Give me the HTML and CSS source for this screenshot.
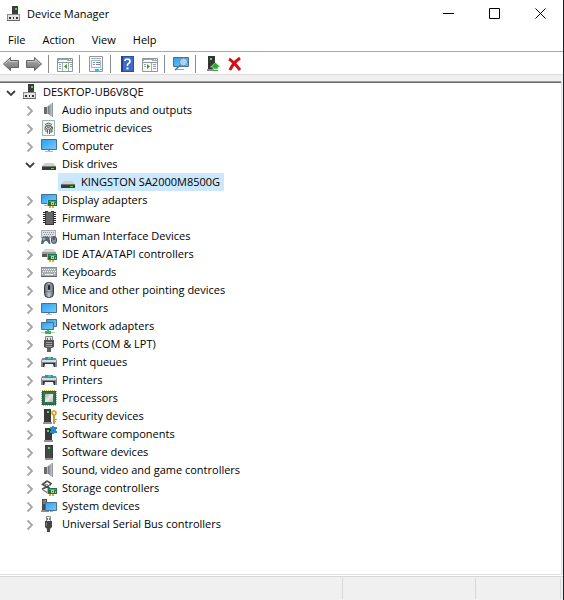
FILE: index.html
```html
<!DOCTYPE html>
<html lang="en">
<head>
<meta charset="utf-8">
<meta name="viewport" content="width=device-width, initial-scale=1">
<title>Device Manager</title>
<link rel="stylesheet" href="styles.css">
</head>
<body>
<svg class="sprite" aria-hidden="true">
  <defs>
    <linearGradient id="blue" x1="0" y1="0" x2="1" y2="1"><stop offset="0" stop-color="#2aa0f0"/><stop offset="1" stop-color="#7cc8ff"/></linearGradient>
    <linearGradient id="metal" x1="0" y1="0" x2="1" y2="0"><stop offset="0" stop-color="#626468"/><stop offset="1" stop-color="#c4c8cc"/></linearGradient>
    <linearGradient id="grey" x1="0" y1="0" x2="0" y2="1"><stop offset="0" stop-color="#b4b4b4"/><stop offset="1" stop-color="#707070"/></linearGradient>
    <linearGradient id="mousebody" x1="0" y1="0" x2="1" y2="0"><stop offset="0" stop-color="#59616d"/><stop offset=".5" stop-color="#c3cad3"/><stop offset="1" stop-color="#59616d"/></linearGradient>
    <linearGradient id="die" x1="0" y1="0" x2="1" y2="1"><stop offset="0" stop-color="#aaa"/><stop offset=".5" stop-color="#e8e8e8"/><stop offset="1" stop-color="#b8b8b8"/></linearGradient>
    <symbol id="closed" viewBox="0 0 14 18"><path d="M4.500 5.500l4.500 4.500-4.500 4.500" fill="none" stroke="#a6a6a6" stroke-width="1.800"/></symbol>
    <symbol id="open" viewBox="0 0 14 18"><path d="M3 8l4 4 4-4" fill="none" stroke="#404040" stroke-width="1.800"/></symbol>
    <symbol id="pc" viewBox="0 0 16 16"><path d="M6 0h6v8H6z" fill="#3c3c3c"/><path d="M9 2h2v2H9z" fill="#38e038"/><path d="M1 8h13v7H1z" fill="#8c8c8c"/><path d="M2 9h11v5H2z" fill="#e4e4e4"/><path d="M1 14h13v1H1z" fill="#666"/><path d="M3 11h2v2H3zM7 11h1v2H7zM10 11h2v2h-2z" fill="#333"/></symbol>
    <symbol id="speaker" viewBox="0 0 16 16"><path d="M3 5h3v7H3z" fill="#666a6e"/><path d="M6 5l5-4v14l-5-4z" fill="url(#metal)"/><path d="M11 1h1v14h-1z" fill="#8e989e"/><path d="M6 5h1v7H6z" fill="#b9c0c5"/></symbol>
    <symbol id="finger" viewBox="0 0 16 16"><path d="M1.500 .5h12v15h-12z" fill="#f4f7f5" stroke="#9bb5a7"/><g fill="none" stroke="#4d4d4d" stroke-width=".9"><path d="M4 4.500q3.500-3 7 0M3.500 7q4-4 8 0v2M4 10q-.5-4 3.500-4t3.500 4v2M5 12V9.500q0-2 2.500-2T10 10v3M6.500 13.500V10q0-1 1-1t1 1v4"/></g></symbol>
    <symbol id="display" viewBox="0 0 16 16"><path d="M.5 1.500h15v10H.5z" fill="url(#blue)" stroke="#47718f"/><path d="M7 12h2v1H7z" fill="#8fa9ba"/><path d="M4 13h8v1H4z" fill="#a9bac5"/></symbol>
    <symbol id="monitor" viewBox="0 0 16 16"><path d="M.5 3.500h15v9H.5z" fill="url(#blue)" stroke="#47718f"/><path d="M7 13h2v1H7z" fill="#8fa9ba"/><path d="M5 14h6v1H5z" fill="#b9c8d1"/></symbol>
    <symbol id="disk" viewBox="0 0 16 16"><path d="M4 7h8l3 3H1z" fill="#d0d0d0"/><path d="M1 10h14v4H1z" fill="#3a3a3a"/><path d="M1 10h14v1H1z" fill="#777"/><path d="M10 12h3v1h-3z" fill="#34e234"/></symbol>
    <symbol id="card" viewBox="0 0 16 16"><path d="M6 8h1v6H6z" fill="#adb3b0"/><path d="M7 8h9v6H7z" fill="#207345"/><path d="M8 9h7v1H8z" fill="#50a472"/><path d="M10 10h3v3h-3z" fill="#b7ceb9"/><path d="M11 11h1v1h-1z" fill="#36563f"/><path d="M14 11h1v2h-1z" fill="#7ac695"/><path d="M8 14h2v2H8zM11 14h2v2h-2z" fill="#e9a626"/></symbol>
    <symbol id="adapter" viewBox="0 0 16 16"><path d="M.5 2.500h15v9H.5z" fill="url(#blue)" stroke="#47718f"/><path d="M3 13h4v1H3z" fill="#a9bac5"/><use href="#card"/></symbol>
    <symbol id="chip" viewBox="0 0 16 16"><path d="M4 1h9v14H4z" fill="#383838"/><path d="M5 2h7v12H5z" fill="#666"/><path d="M7 1h3v1H7z" fill="#ddd"/><path d="M2 2.500h2M2 4.500h2M2 6.500h2M2 8.500h2M2 10.500h2M2 12.500h2M13 2.500h2M13 4.500h2M13 6.500h2M13 8.500h2M13 10.500h2M13 12.500h2" stroke="#222"/></symbol>
    <symbol id="hid" viewBox="0 0 16 16"><path d="M0 2h15v8H0z" fill="#a8adb2"/><path d="M1 3h13v6H1z" fill="#dfe2e5"/><path d="M2 4.500h11M3 6.500h10M2 8.500h11" stroke="#8a8f94" stroke-dasharray="1 1"/><path d="M0 16l1-6q.5-2 2.500-1.500h2Q8 8 8.500 10l1 6H8l-2-3H4l-2 3z" fill="#56626f"/><path d="M3 9.500v3M1.500 11h3" stroke="#b6c4d0"/><path d="M6 10h1v1H6z" fill="#e34b3f"/><rect x="10.500" y="8.500" width="5" height="7" rx="2.500" fill="#8793a0" stroke="#46515d"/><path d="M13 9v3" stroke="#263440"/></symbol>
    <symbol id="ide" viewBox="0 0 16 16"><path d="M4 3h8l3 3H1z" fill="#d6d6d6"/><path d="M1 6h14v5H1z" fill="#555"/><path d="M1 6h14v2H1z" fill="#999"/><use href="#card"/></symbol>
    <symbol id="keyboard" viewBox="0 0 16 16"><path d="M0 3h16v10H0z" fill="#868c92"/><path d="M1 4h14v8H1z" fill="#a7adb2"/><path d="M1 5.500h14M2 7.500h13M1 9.500h2M13 9.500h2" stroke="#f4f4f4" stroke-dasharray="1 1"/><path d="M4 10.500h8" stroke="#f4f4f4"/><path d="M0 12h16v1H0z" fill="#5e646a"/></symbol>
    <symbol id="mouse" viewBox="0 0 16 16"><rect x="3.500" y=".5" width="9" height="15" rx="4" fill="url(#mousebody)" stroke="#35383d"/><path d="M6 2h4v6H6z" fill="#7e8996"/><rect x="7" y="3" width="2" height="5" rx="1" fill="#20252b"/><path d="M4 9q4 2 8 0" fill="none" stroke="#6e7681"/></symbol>
    <symbol id="network" viewBox="0 0 16 16"><path d="M5.500 1.500h10v7h-10z" fill="url(#blue)" stroke="#47718f"/><path d="M.5 4.500h12v7H.5z" fill="url(#blue)" stroke="#47718f"/><path d="M6 12h2v2H6z" fill="#39bc55"/><path d="M0 14h14v1H0z" fill="#acd8b4"/><path d="M4 13h6v3H4z" fill="#38b451"/></symbol>
    <symbol id="port" viewBox="0 0 16 16"><path d="M4.500.5h7v4h-7z" fill="#e4e4e4" stroke="#828282"/><path d="M6 2h1v2H6zM9 2h1v2H9z" fill="#666"/><path d="M3 4h10v7l-2 1H5l-2-1z" fill="#555"/><path d="M5 6.500h6M5 8.500h6M5 10.500h6" stroke="#a1a1a1"/><path d="M6 12h4v4H6z" fill="#626262"/></symbol>
    <symbol id="printer" viewBox="0 0 16 16"><path d="M4 3h8v3H4z" fill="#2490dd"/><path d="M7 3h3v2H7z" fill="#34cda7"/><path d="M1 4h3v2h8V4h3l1 3v6H0V7z" fill="#85898c"/><path d="M1 6h14v2H1z" fill="#d9dcde"/><path d="M2 9h12v4H2z" fill="#303438"/><path d="M4 10h8l1 4H3z" fill="#f7f7f7"/></symbol>
    <symbol id="cpu" viewBox="0 0 16 16"><path d="M1 1h14v14H1z" fill="none" stroke="#c4a94b" stroke-width="2" stroke-dasharray="1 1"/><path d="M1 1h14v14H1z" fill="#24613f"/><path d="M2 2h12v12H2z" fill="#347451"/><path d="M4 4h8v8H4z" fill="url(#die)"/></symbol>
    <symbol id="tower" viewBox="0 0 16 16"><path d="M4 1h8v14H4z" fill="#393939"/><path d="M5 2h6v12H5z" fill="#484848"/><path d="M7 3h2v2H7z" fill="#42ed42"/><path d="M4 14h8v2H4z" fill="#929292"/></symbol>
    <symbol id="security" viewBox="0 0 16 16"><path d="M3 1h7v14H3z" fill="#393939"/><path d="M6 3h2v2H6z" fill="#42ed42"/><path d="M2 14h9v2H2z" fill="#929292"/><circle cx="13" cy="5" r="2" fill="#fff1ca" stroke="#d49b2b" stroke-width="1.500"/><path d="M12 7h2v9h-2zM14 11h2v1h-2zM14 13h1v1h-1z" fill="#d49b2b"/></symbol>
    <symbol id="component" viewBox="0 0 16 16"><path d="M4 2h7v13H4z" fill="#393939"/><path d="M6 4h2v2H6z" fill="#42ed42"/><path d="M3 14h9v2H3z" fill="#929292"/><path d="M9 1h2V0h2v1h3v2h-1v2h1v2h-3v1h-2V7H9V5h1V3H9z" fill="#298bc8"/></symbol>
    <symbol id="storage" viewBox="0 0 16 16"><path d="M6 .8l4 2.700-1.500 2M6 1L1.500 4.500 6 7l2-1.500M1 9l5-2 4 2" fill="none" stroke="#4c4c4c" stroke-width="1.600"/><path d="M4 4.500h3" stroke="#999"/><path d="M1 9l6 3v2l-6-4z" fill="#777"/><use href="#card"/></symbol>
    <symbol id="system" viewBox="0 0 16 16"><path d="M1 1h5v12H1z" fill="#464b4e"/><path d="M2 3h3M2 5h2" stroke="#a6adb1"/><path d="M4 2h1v1H4z" fill="#4cef52"/><path d="M0 12h8v2H0z" fill="#8b8f92"/><path d="M4.500 4.500h11v8h-11z" fill="url(#blue)" stroke="#47718f"/><path d="M9 13h3v1H9z" fill="#a6b5bd"/></symbol>
    <symbol id="usb" viewBox="0 0 16 16"><path d="M5.500.5h4v5h-4z" fill="#f0f0f0" stroke="#8d8d8d"/><path d="M6 2h1v2H6zM8 2h1v2H8z" fill="#777"/><path d="M4 5h7v6l-2 2H6l-2-2z" fill="#454545"/><path d="M5 6h1v4H5z" fill="#777"/><path d="M6 12h3v4H6z" fill="#484848"/></symbol>
    <symbol id="arrow" viewBox="0 0 16 16"><path d="M.5 8L7.500 1.500V4.500h8v7h-8v3z" fill="url(#grey)" stroke="#646464"/><path d="M2 8l4.500-4.500v2h8" fill="none" stroke="#c7c7c7"/></symbol>
    <symbol id="pane" viewBox="0 0 16 16"><path d="M.5 2.500h15v13H.5z" fill="#fafafa" stroke="#8e969c"/><path d="M1 3h14v2H1z" fill="#9ca6ae"/><path d="M2 4h8v1H2zM12 3h1v1h-1zM14 3h1v1h-1z" fill="#fff"/><path d="M1 6.500h14" stroke="#8e969c"/></symbol>
  </defs>
</svg>

<div class="window">
  <header class="titlebar">
    <svg class="icon" aria-hidden="true"><use href="#pc"/></svg>
    <h1 class="title">Device Manager</h1>
    <div class="controls">
      <button type="button" class="control" aria-label="Minimize"><svg viewBox="0 0 11 11"><path d="M0 5.500h11"/></svg></button>
      <button type="button" class="control" aria-label="Maximize"><svg viewBox="0 0 11 11"><path d="M.5.500h10v10H.5z"/></svg></button>
      <button type="button" class="control" aria-label="Close"><svg viewBox="0 0 11 11"><path d="M.5.500l10 10M10.500.500l-10 10"/></svg></button>
    </div>
  </header>

  <nav class="menu" aria-label="Main menu">
    <button type="button">File</button><button type="button">Action</button><button type="button">View</button><button type="button">Help</button>
  </nav>

  <div class="toolbar" role="toolbar" aria-label="Tools">
    <div class="group">
      <button type="button" class="tool" aria-label="Back"><svg class="icon"><use href="#arrow"/></svg></button>
      <button type="button" class="tool" aria-label="Forward"><svg class="icon flip"><use href="#arrow"/></svg></button>
    </div>
    <div class="group">
      <button type="button" class="tool" aria-label="Console tree"><svg class="icon" viewBox="0 0 16 16"><use href="#pane"/><path d="M5.500 7v8M11.500 7v8" stroke="#a9b0b5"/><path d="M2 8.500h2M2 10.500h2M2 12.500h2M13 8.500h2M13 10.500h2" stroke="#93a0aa"/><path d="M10 8v5l-3-2.500z" fill="#31a91d"/></svg></button>
    </div>
    <div class="group">
      <button type="button" class="tool" aria-label="Properties"><svg class="icon" viewBox="0 0 16 16"><path d="M1.500.500h13v15h-13z" fill="#f5f5f5" stroke="#92999e"/><path d="M3 2.500h10" stroke="#a8b0b6"/><path d="M3.500 4.500h9v7h-9z" fill="#fff" stroke="#a3b4c4"/><path d="M5 6.500h2M8 6.500h4M5 8.500h2M8 8.500h4" stroke="#718ca6"/><path d="M7 13h4v2H7z" fill="#28bdeb"/><path d="M12 13h2v1h-2z" fill="#999"/></svg></button>
    </div>
    <div class="group">
      <button type="button" class="tool" aria-label="Help"><svg class="icon" viewBox="0 0 16 16"><path d="M2 0h13v16H2z" fill="#2852aa"/><path d="M3 1h11v14H3z" fill="#3f6bc7"/><path d="M2 0h2v16H2z" fill="#20448e"/><path d="M6 5q0-2 2.500-2T11 5.500q0 1.200-1.500 2T8.500 10" fill="none" stroke="#fff" stroke-width="1.700"/><path d="M7.500 11.500h2v2h-2z" fill="#fff"/></svg></button>
      <button type="button" class="tool" aria-label="Action pane"><svg class="icon" viewBox="0 0 16 16"><use href="#pane"/><path d="M9.500 7v8" stroke="#a9b0b5"/><path d="M11 8.500h3M11 10.500h3M11 12.500h3M2 8.500h2M2 10.500h2" stroke="#93a0aa"/><path d="M5 8v5l3-2.500z" fill="#31a91d"/></svg></button>
    </div>
    <div class="group">
      <button type="button" class="tool" aria-label="Scan for hardware changes"><svg class="icon" viewBox="0 0 16 16"><path d="M.5 1.500h15v9H.5z" fill="url(#blue)" stroke="#47718f"/><path d="M3 13h8v1H3z" fill="#8ea8b8"/><circle cx="10.500" cy="6" r="4" fill="#a4d6f7" stroke="#698ba5"/><path d="M7.500 9L2 14" stroke="#4d7897" stroke-width="1.500"/></svg></button>
    </div>
    <div class="group">
      <button type="button" class="tool" aria-label="Update driver"><svg class="icon" viewBox="0 0 16 16"><path d="M4 0h7v13H4z" fill="#353535"/><path d="M6 2h2v2H6z" fill="#48ea48"/><path d="M3 13h7v2H3z" fill="#8b8b8b"/><path d="M11.500 6.500l5 4.500H14v2H9v-2H6.500z" fill="#27ac2d" stroke="#fff" stroke-width=".5"/><path d="M9 14h5v1H9z" fill="#27ac2d"/></svg></button>
      <button type="button" class="tool" aria-label="Uninstall device"><svg class="icon" viewBox="0 0 16 16"><path d="M2 3q5 3 11 11M13 2Q6 7 3 14" fill="none" stroke="#d90d16" stroke-width="3"/></svg></button>
    </div>
  </div>

  <main class="pane">
    <ul class="tree" role="tree" aria-label="Devices">
      <li role="treeitem" aria-expanded="true">
        <div class="row"><button type="button" class="toggle" aria-label="Collapse"><svg><use href="#open"/></svg></button><span class="node"><svg class="icon"><use href="#pc"/></svg>DESKTOP-UB6V8QE</span></div>
        <ul role="group">
          <li role="treeitem"><div class="row"><button type="button" class="toggle" aria-label="Expand"><svg><use href="#closed"/></svg></button><span class="node"><svg class="icon"><use href="#speaker"/></svg>Audio inputs and outputs</span></div></li>
          <li role="treeitem"><div class="row"><button type="button" class="toggle" aria-label="Expand"><svg><use href="#closed"/></svg></button><span class="node"><svg class="icon"><use href="#finger"/></svg>Biometric devices</span></div></li>
          <li role="treeitem"><div class="row"><button type="button" class="toggle" aria-label="Expand"><svg><use href="#closed"/></svg></button><span class="node"><svg class="icon"><use href="#display"/></svg>Computer</span></div></li>
          <li role="treeitem" aria-expanded="true"><div class="row"><button type="button" class="toggle" aria-label="Collapse"><svg><use href="#open"/></svg></button><span class="node"><svg class="icon"><use href="#disk"/></svg>Disk drives</span></div>
            <ul role="group">
              <li role="treeitem" aria-selected="true"><div class="row leaf"><span class="node selected"><svg class="icon"><use href="#disk"/></svg>KINGSTON SA2000M8500G</span></div></li>
            </ul>
          </li>
          <li role="treeitem"><div class="row"><button type="button" class="toggle" aria-label="Expand"><svg><use href="#closed"/></svg></button><span class="node"><svg class="icon"><use href="#adapter"/></svg>Display adapters</span></div></li>
          <li role="treeitem"><div class="row"><button type="button" class="toggle" aria-label="Expand"><svg><use href="#closed"/></svg></button><span class="node"><svg class="icon"><use href="#chip"/></svg>Firmware</span></div></li>
          <li role="treeitem"><div class="row"><button type="button" class="toggle" aria-label="Expand"><svg><use href="#closed"/></svg></button><span class="node"><svg class="icon"><use href="#hid"/></svg>Human Interface Devices</span></div></li>
          <li role="treeitem"><div class="row"><button type="button" class="toggle" aria-label="Expand"><svg><use href="#closed"/></svg></button><span class="node"><svg class="icon"><use href="#ide"/></svg>IDE ATA/ATAPI controllers</span></div></li>
          <li role="treeitem"><div class="row"><button type="button" class="toggle" aria-label="Expand"><svg><use href="#closed"/></svg></button><span class="node"><svg class="icon"><use href="#keyboard"/></svg>Keyboards</span></div></li>
          <li role="treeitem"><div class="row"><button type="button" class="toggle" aria-label="Expand"><svg><use href="#closed"/></svg></button><span class="node"><svg class="icon"><use href="#mouse"/></svg>Mice and other pointing devices</span></div></li>
          <li role="treeitem"><div class="row"><button type="button" class="toggle" aria-label="Expand"><svg><use href="#closed"/></svg></button><span class="node"><svg class="icon"><use href="#monitor"/></svg>Monitors</span></div></li>
          <li role="treeitem"><div class="row"><button type="button" class="toggle" aria-label="Expand"><svg><use href="#closed"/></svg></button><span class="node"><svg class="icon"><use href="#network"/></svg>Network adapters</span></div></li>
          <li role="treeitem"><div class="row"><button type="button" class="toggle" aria-label="Expand"><svg><use href="#closed"/></svg></button><span class="node"><svg class="icon"><use href="#port"/></svg>Ports (COM &amp; LPT)</span></div></li>
          <li role="treeitem"><div class="row"><button type="button" class="toggle" aria-label="Expand"><svg><use href="#closed"/></svg></button><span class="node"><svg class="icon"><use href="#printer"/></svg>Print queues</span></div></li>
          <li role="treeitem"><div class="row"><button type="button" class="toggle" aria-label="Expand"><svg><use href="#closed"/></svg></button><span class="node"><svg class="icon"><use href="#printer"/></svg>Printers</span></div></li>
          <li role="treeitem"><div class="row"><button type="button" class="toggle" aria-label="Expand"><svg><use href="#closed"/></svg></button><span class="node"><svg class="icon"><use href="#cpu"/></svg>Processors</span></div></li>
          <li role="treeitem"><div class="row"><button type="button" class="toggle" aria-label="Expand"><svg><use href="#closed"/></svg></button><span class="node"><svg class="icon"><use href="#security"/></svg>Security devices</span></div></li>
          <li role="treeitem"><div class="row"><button type="button" class="toggle" aria-label="Expand"><svg><use href="#closed"/></svg></button><span class="node"><svg class="icon"><use href="#component"/></svg>Software components</span></div></li>
          <li role="treeitem"><div class="row"><button type="button" class="toggle" aria-label="Expand"><svg><use href="#closed"/></svg></button><span class="node"><svg class="icon"><use href="#tower"/></svg>Software devices</span></div></li>
          <li role="treeitem"><div class="row"><button type="button" class="toggle" aria-label="Expand"><svg><use href="#closed"/></svg></button><span class="node"><svg class="icon"><use href="#speaker"/></svg>Sound, video and game controllers</span></div></li>
          <li role="treeitem"><div class="row"><button type="button" class="toggle" aria-label="Expand"><svg><use href="#closed"/></svg></button><span class="node"><svg class="icon"><use href="#storage"/></svg>Storage controllers</span></div></li>
          <li role="treeitem"><div class="row"><button type="button" class="toggle" aria-label="Expand"><svg><use href="#closed"/></svg></button><span class="node"><svg class="icon"><use href="#system"/></svg>System devices</span></div></li>
          <li role="treeitem"><div class="row"><button type="button" class="toggle" aria-label="Expand"><svg><use href="#closed"/></svg></button><span class="node"><svg class="icon"><use href="#usb"/></svg>Universal Serial Bus controllers</span></div></li>
        </ul>
      </li>
    </ul>
  </main>

  <footer class="status"><span></span><span></span><span></span></footer>
</div>
</body>
</html>
```
FILE: styles.css
```css
* { box-sizing: border-box; }

body {
  margin: 0;
  background: #fff;
  color: #000;
  font: 11px/18px "Open Sans", "Noto Sans", sans-serif;
}

button {
  margin: 0;
  padding: 0;
  border: 0;
  background: none;
  color: inherit;
  font: inherit;
}

svg { display: block; }
.sprite { position: absolute; width: 0; height: 0; }
.icon { flex: none; width: 16px; height: 16px; }
.flip { transform: scaleX(-1); }

.window {
  display: flex;
  flex-direction: column;
  min-height: 100vh;
  border-right: 1px solid #1e1e22;
}

.titlebar {
  display: flex;
  align-items: center;
  gap: 5px;
  height: 27px;
  padding-left: 6px;
}
.title { flex: 1; margin: 0; font-size: 11px; font-weight: 400; }
.controls { display: flex; align-self: stretch; }
.control { display: grid; place-items: center; width: 46px; }
.control svg { width: 11px; height: 11px; fill: none; stroke: #000; }

.menu {
  display: flex;
  align-items: center;
  gap: 17px;
  height: 24px;
  padding: 2px 0 0 8px;
}

.toolbar {
  display: flex;
  align-items: center;
  height: 24px;
  padding-top: 2px;
  border-top: 1px solid #a8a8ae;
  border-bottom: 1px solid #dcdcdc;
}
.group {
  display: flex;
  align-items: center;
  gap: 7px;
  height: 18px;
  padding: 0 6px 0 8px;
  border-right: 1px solid #8c8c8c;
}
.group:first-child { padding-left: 3px; }
.group:last-child { border: 0; }

.pane {
  display: flex;
  flex: 1;
  border-top: 6px solid #f0f0f0;
  border-right: 1px solid #f0f0f0;
}
.tree {
  flex: 1;
  border: solid #e0e0e0;
  border-width: 0 1px 1px 0;
  box-shadow: inset 0 1px #a0a0a0, inset 0 2px #696969;
}
.tree, .tree ul { margin: 0; padding: 0; list-style: none; }
.tree { padding-top: 2px; }
.tree ul { padding-left: 19px; }

.row { display: flex; gap: 2px; height: 18px; padding-left: 4px; }
.toggle { width: 14px; height: 18px; }
.toggle svg { width: 14px; height: 18px; }
.leaf { padding-left: 20px; }
.node {
  display: flex;
  align-items: center;
  gap: 5px;
  padding: 0 4px 0 2px;
  white-space: nowrap;
}
.selected { background: #cce8ff; }

.status {
  display: grid;
  grid-template-columns: 1fr 133px 85px;
  height: 24px;
  margin-top: 1px;
  padding: 1px 2px 1px 0;
  border-top: 1px solid #d7d7d7;
  background: #f0f0f0;
}
.status span { border-right: 1px solid #d7d7d7; }
```
